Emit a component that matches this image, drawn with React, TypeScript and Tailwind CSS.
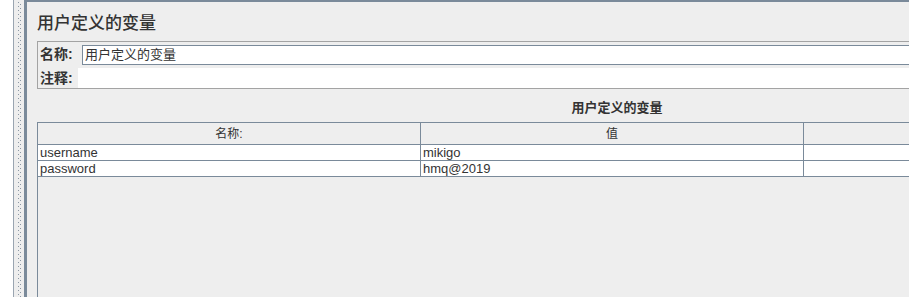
import React from "react";

const rows = [
  { name: "username", value: "mikigo" },
  { name: "password", value: "hmq@2019" },
];

const font = { fontFamily: '"Liberation Sans", "Noto Sans CJK SC", sans-serif' };

export default function App() {
  return (
    <div className="flex h-[297px] w-[909px] overflow-hidden bg-white text-[#333]" style={font}>
      <div className="w-[14px] shrink-0 border-r border-[#9aa5b1] bg-white" />
      <div className="flex w-[10px] shrink-0 justify-center bg-[#eeeeee] pl-[2px]">
        <svg width="4" height="297" className="mt-[2px]">
          <defs>
            <pattern id="grip" width="4" height="4" patternUnits="userSpaceOnUse">
              <rect x="0" y="0" width="1" height="1" fill="#8a96a3" />
              <rect x="2" y="2" width="1" height="1" fill="#8a96a3" />
            </pattern>
          </defs>
          <rect width="4" height="297" fill="url(#grip)" />
        </svg>
      </div>
      <div className="w-[3px] shrink-0 bg-[#7a8a9a]" />
      <main className="flex min-w-0 flex-1 flex-col border-t-2 border-[#7a8a9a] bg-[#eeeeee] pl-[10px]">
        <h1 className="flex h-[39px] shrink-0 items-center pt-[3px] text-[17px] font-medium leading-none text-[#333]">用户定义的变量</h1>

        <section className="w-[1200px] shrink-0 border border-[#a3a3a3] pl-[2px]">
          <div className="flex h-[24px] items-center pt-[1px]">
            <span className="w-[42px] text-[14px] font-bold">名称:</span>
            <div className="flex h-[20px] flex-1 items-center border border-[#7a8a9a] bg-white pl-[2px] text-[13px]">用户定义的变量</div>
          </div>
          <div className="mt-[2px] flex h-[20px] items-center">
            <span className="w-[38px] text-[14px] font-bold">注释:</span>
            <div className="h-[20px] flex-1 bg-white" />
          </div>
        </section>

        <div className="flex h-[33px] w-[1160px] shrink-0 items-center justify-center pt-[5px] text-[13px] font-bold">用户定义的变量</div>

        <div className="flex-1 w-[1200px] border-l border-t border-[#7a8a9a]">
          <div className="grid grid-cols-[383px_383px_383px] text-[13px]">
            <div className="flex h-[22px] items-center justify-center border-b border-r border-[#7a8a9a] text-[12px]">名称:</div>
            <div className="flex h-[22px] items-center justify-center border-b border-r border-[#7a8a9a] text-[12px]">值</div>
            <div className="h-[22px] border-b border-r border-[#7a8a9a]" />
            {rows.map((r) => (
              <React.Fragment key={r.name}>
                <div className="flex h-[16px] items-center border-b border-r border-[#7a8a9a] bg-white pl-[2px] leading-none">{r.name}</div>
                <div className="flex h-[16px] items-center border-b border-r border-[#7a8a9a] bg-white pl-[2px] leading-none">{r.value}</div>
                <div className="h-[16px] border-b border-r border-[#7a8a9a] bg-white" />
              </React.Fragment>
            ))}
          </div>
        </div>
      </main>
    </div>
  );
}
